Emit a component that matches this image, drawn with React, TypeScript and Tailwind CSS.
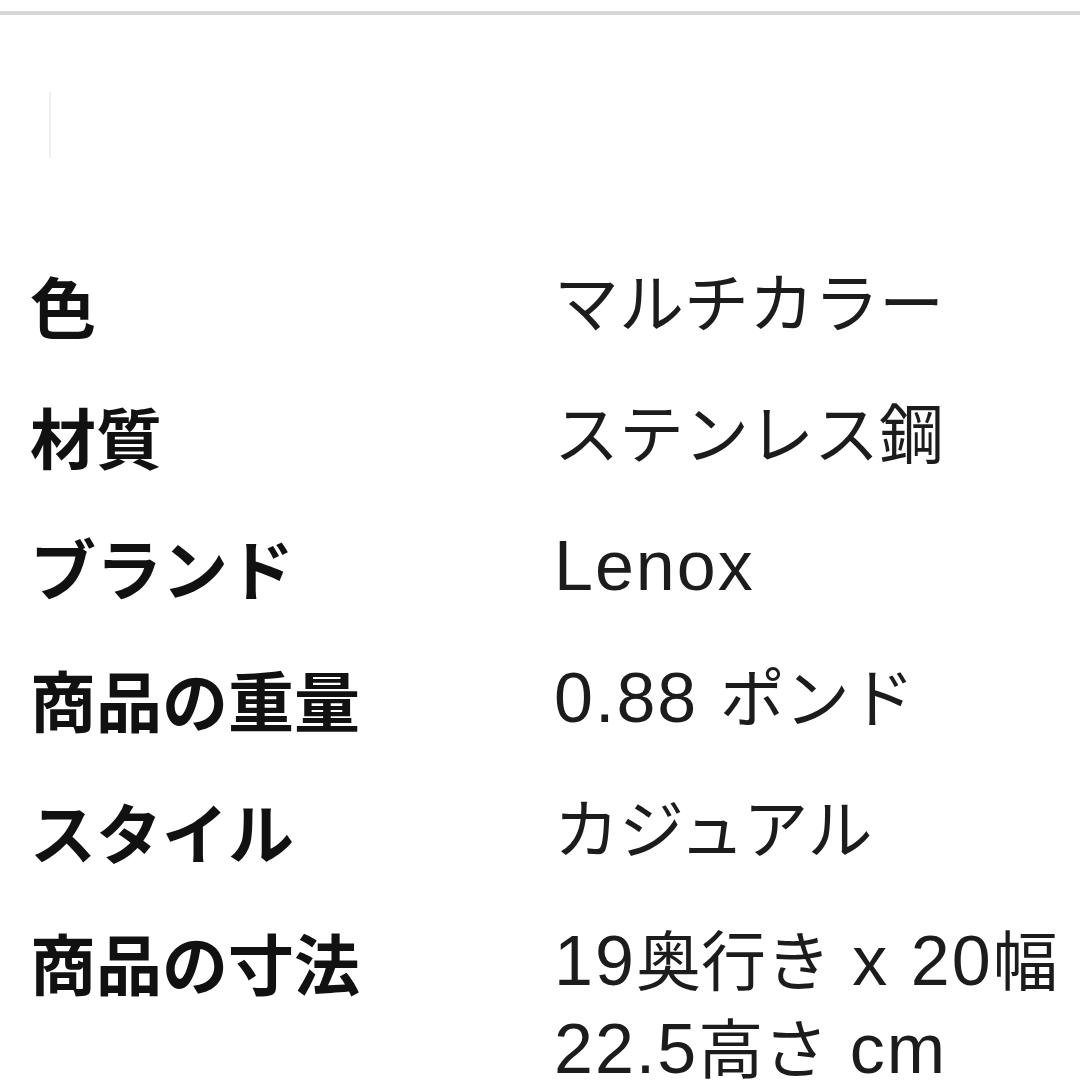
import React from 'react'

type Spec = { label: string; value: React.ReactNode }

const Lat = ({ children }: { children: React.ReactNode }) => (
  <span className="text-[70px] tracking-[2px]">{children}</span>
)

const specs: Spec[] = [
  { label: '色', value: 'マルチカラー' },
  { label: '材質', value: 'ステンレス鋼' },
  { label: 'ブランド', value: <Lat>Lenox</Lat> },
  { label: '商品の重量', value: <><Lat>0.88 </Lat>ポンド</> },
  { label: 'スタイル', value: 'カジュアル' },
  {
    label: '商品の寸法',
    value: (
      <>
        <Lat>19</Lat>奥行き<Lat> x 20</Lat>幅
        <br />
        <Lat>22.5</Lat>高さ<Lat> cm</Lat>
      </>
    ),
  },
]

export default function App() {
  return (
    <div className="w-[1080px] h-[1080px] overflow-hidden bg-white" style={{ fontFamily: '"Liberation Sans", "Noto Sans CJK JP", sans-serif' }}>
      {/* top divider */}
      <div className="mt-[11px] h-[4px] w-full bg-[#d6d6d6]" />

      {/* faint cursor line */}
      <div className="ml-[49px] mt-[77px] h-[66px] w-[2px] bg-[#efefef]" />

      <div className="mt-[81px]">
        {specs.map((s) => (
          <div key={s.label} className="flex items-start py-[22px] leading-[87px]">
            <div
              className="w-[554px] shrink-0 pl-[30px] text-[66px] font-bold text-[#111]"
              style={{ fontFamily: '"Noto Sans CJK JP", sans-serif' }}
            >
              {s.label}
            </div>
            <div className="whitespace-nowrap text-[65px] font-normal text-[#1c1c1c]">{s.value}</div>
          </div>
        ))}
      </div>
    </div>
  )
}
